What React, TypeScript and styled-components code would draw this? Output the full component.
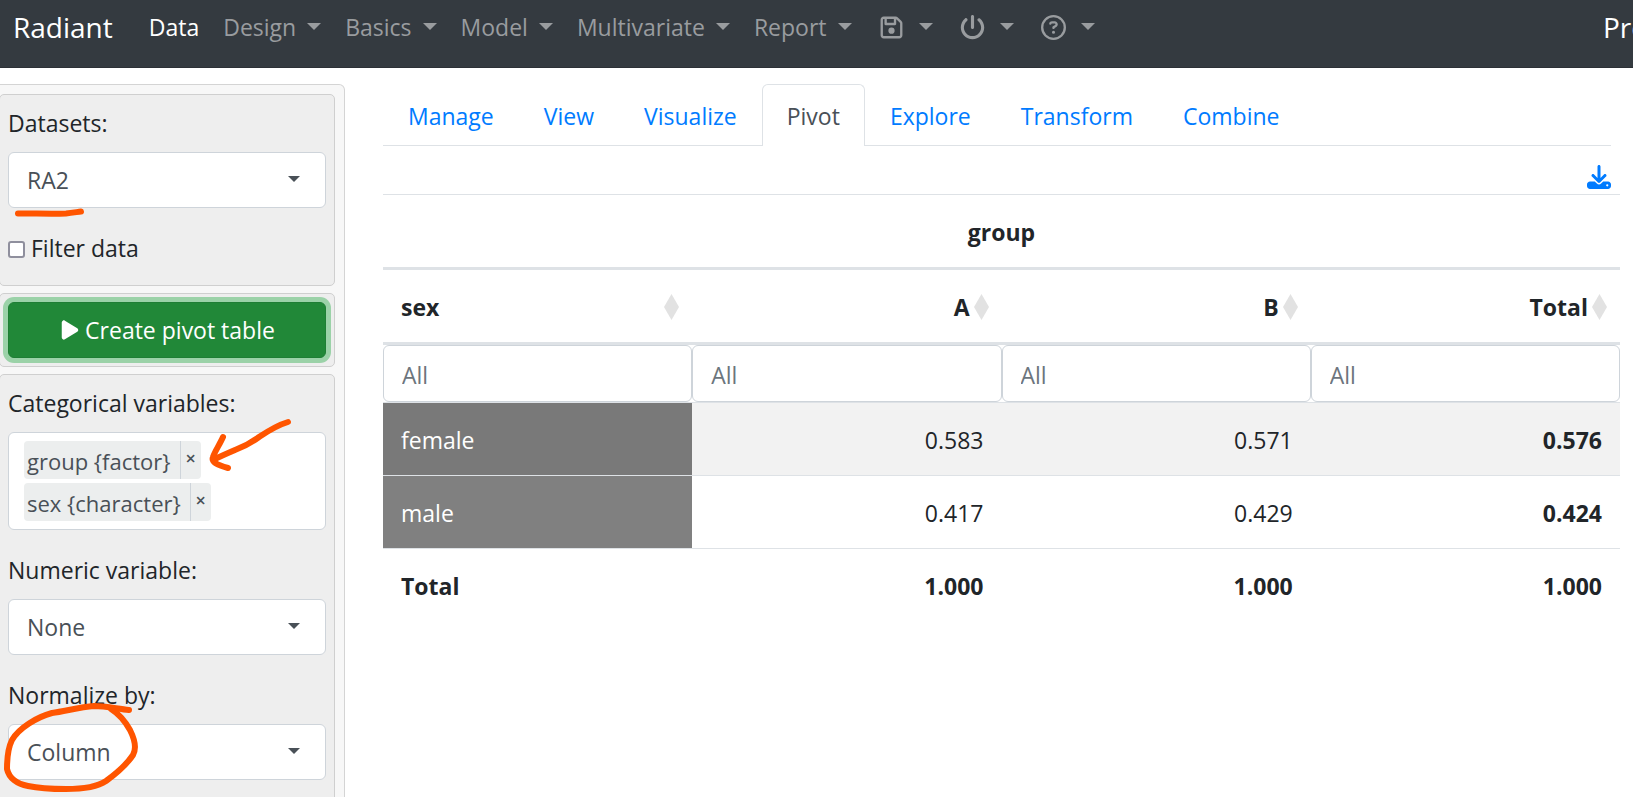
import React from "react";
import styled, { createGlobalStyle } from "styled-components";
import {
  FaDownload,
  FaPlay,
  FaPowerOff,
  FaRegCircleQuestion,
  FaRegFloppyDisk,
} from "react-icons/fa6";

const GlobalStyle = createGlobalStyle`
  *, *::before, *::after { box-sizing: border-box; }
  html, body { margin: 0; background: #fff; }
  html { overflow: hidden; }
  #root { height: 100vh; overflow: hidden; }
  body, button, input, select {
    font-family: "Open Sans", "Noto Sans", sans-serif;
    font-size: 23px;
    line-height: 36px;
    color: #212529;
  }
`;

const Navbar = styled.nav`
  display: flex;
  align-items: flex-start;
  height: 68px;
  padding: 0 0 0 13px;
  background: #343a40;
  border-bottom: 1px solid #2c3036;
  white-space: nowrap;
  overflow: hidden;
`;

const Brand = styled.a`
  padding-top: 7px;
  font-size: 28px;
  line-height: 40px;
  color: #fff;
  text-decoration: none;
`;

const Credit = styled(Brand)`
  flex: none;
  width: 30px;
  margin-left: auto;
  overflow: hidden;
`;

const NavList = styled.ul`
  display: flex;
  margin: 0 0 0 24px;
  padding: 9px 0 0;
  list-style: none;
`;

const NavLink = styled.a<{ $active?: boolean }>`
  display: flex;
  align-items: center;
  gap: 11px;
  height: 36px;
  padding: 0 12px;
  color: ${(p) => (p.$active ? "#fff" : "#999c9f")};
  text-decoration: none;
`;

const NavIcon = styled.span`
  display: flex;
  justify-content: center;
  width: 32px;
`;

const NavCaret = styled.span`
  margin: 0 0 1px;
  border: 7px solid transparent;
  border-top-color: currentColor;
  border-bottom: 0;
`;

const Page = styled.div`
  display: flex;
  align-items: flex-start;
  padding-top: 16px;
`;

const Sidebar = styled.aside`
  flex: none;
  width: 345px;
  padding: 9px 9px 0 0;
  background: #f7f7f7;
  border: 1px solid #d4d4d4;
  border-left: 0;
  border-radius: 0 6px 0 0;
`;

const Well = styled.section<{ $pad: string }>`
  margin: 0 0 7px -1px;
  padding: ${(p) => p.$pad};
  background: #eee;
  border: 1px solid #cfcfcf;
  border-radius: 5px;
`;

const Field = styled.div`
  display: flex;
  flex-direction: column;
  gap: 11px;
  margin-bottom: 22px;
`;

const SelectShell = styled.div`
  display: grid;
  align-items: center;
  > * { grid-area: 1 / 1; }
`;

const SelectBox = styled.select`
  width: 100%;
  height: 56px;
  padding: 0 48px 0 18px;
  appearance: none;
  color: #495057;
  background: #fff;
  border: 1px solid #ced4da;
  border-radius: 6px;
`;

const SelectCaret = styled.span`
  justify-self: end;
  margin: 0 26px 2px 0;
  border: 6px solid transparent;
  border-top-color: #495057;
  border-bottom: 0;
  pointer-events: none;
`;

const CheckLabel = styled.label`
  display: flex;
  align-items: center;
  gap: 6px;
`;

const CheckBox = styled.input`
  width: 17px;
  height: 17px;
  margin: 3px 0 0;
  appearance: none;
  background: #fff;
  border: 2px solid #8f8f9d;
  border-radius: 3px;
`;

const RunButton = styled.button`
  display: flex;
  align-items: center;
  justify-content: center;
  gap: 4px;
  width: 100%;
  height: 56px;
  color: #fff;
  background: #218838;
  border: 1px solid #1e7e34;
  border-radius: 6px;
  box-shadow: 0 0 0 5px #9bd2a8;
`;

const ChipBox = styled.div`
  display: flex;
  flex-direction: column;
  align-items: flex-start;
  gap: 4px;
  padding: 8px 15px;
  background: #fff;
  border: 1px solid #ced4da;
  border-radius: 6px;
`;

const Chip = styled.span`
  display: flex;
  height: 38px;
  padding-left: 3px;
  font-size: 22px;
  line-height: 40px;
  color: #495057;
  background: #eceeee;
  border-radius: 4px;
`;

const ChipRemove = styled.button`
  width: 21px;
  margin-left: 9px;
  padding: 0 0 4px;
  font-size: 18px;
  line-height: 30px;
  font-weight: 600;
  color: #495057;
  background: none;
  border: 0;
  border-left: 1px solid #ced4da;
`;

const Main = styled.main`
  flex: 1;
  min-width: 0;
  padding: 0 13px 0 38px;
`;

const Tabs = styled.ul`
  display: flex;
  margin: 0 9px 0 0;
  padding: 0;
  list-style: none;
  border-bottom: 1px solid #dee2e6;
`;

const Tab = styled.a<{ $active?: boolean }>`
  display: block;
  height: 62px;
  margin-bottom: -1px;
  padding: 13px 24px 0;
  text-decoration: none;
  color: ${(p) => (p.$active ? "#495057" : "#007bff")};
  background: ${(p) => (p.$active ? "#fff" : "transparent")};
  border: 1px solid ${(p) => (p.$active ? "#dee2e6" : "transparent")};
  border-bottom: 0;
  border-radius: 6px 6px 0 0;
`;

const Toolbar = styled.div`
  display: flex;
  justify-content: flex-end;
  height: 48px;
  padding: 19px 9px 0 0;
`;

const DownloadLink = styled.a`
  display: block;
  height: 24px;
  color: #007bff;
  svg { display: block; }
`;

const PivotTable = styled.table`
  width: 100%;
  table-layout: fixed;
  border-collapse: separate;
  border-spacing: 0;
`;

const GroupHead = styled.th`
  padding: 19px 18px 17px;
  border-top: 1px solid #dee2e6;
  border-bottom: 3px solid #dee2e6;
`;

const SortHead = styled.th`
  padding: 19px 13px 17px 18px;
  border-bottom: 3px solid #dee2e6;
`;

const SortButton = styled.button<{ $spread?: boolean }>`
  display: flex;
  align-items: center;
  justify-content: ${(p) => (p.$spread ? "space-between" : "flex-end")};
  gap: 4px;
  width: 100%;
  height: 36px;
  padding: 0;
  font-weight: 700;
  background: none;
  border: 0;
`;

const FilterCell = styled.td`
  padding: 0;
`;

const FilterInput = styled.input`
  display: block;
  width: 100%;
  height: 57px;
  padding: 2px 18px 0;
  background: #fff;
  border: 1px solid #ced4da;
  border-radius: 6px;
  &::placeholder { color: #6c757d; opacity: 1; }
`;

const BodyRow = styled.tr<{ $odd: boolean }>`
  background: ${(p) => (p.$odd ? "#f2f2f2" : "#fff")};
`;

const RowName = styled.th<{ $odd: boolean }>`
  padding: 19px 18px 17px;
  font-weight: 400;
  text-align: left;
  color: #fff;
  background: ${(p) => (p.$odd ? "#797979" : "#808080")};
  border-top: 1px solid #dee2e6;
`;

const Value = styled.td<{ $bold?: boolean }>`
  padding: 19px 18px 17px;
  font-weight: ${(p) => (p.$bold ? 700 : 400)};
  text-align: right;
  border-top: 1px solid #dee2e6;
`;

const FootName = styled.th`
  padding: 19px 18px 17px;
  text-align: left;
  border-top: 1px solid #dee2e6;
`;

const Ink = styled.svg`
  position: absolute;
  top: 0;
  left: 0;
  width: 345px;
  height: 797px;
  fill: none;
  stroke: #ff5500;
  stroke-linecap: round;
  stroke-linejoin: round;
  pointer-events: none;
`;

const menus: { label: string; icon?: React.ReactNode }[] = [
  { label: "Design" },
  { label: "Basics" },
  { label: "Model" },
  { label: "Multivariate" },
  { label: "Report" },
  { label: "Save", icon: <FaRegFloppyDisk size={25} /> },
  { label: "Power", icon: <FaPowerOff size={25} /> },
  { label: "Help", icon: <FaRegCircleQuestion size={25} /> },
];

const tabs = ["Manage", "View", "Visualize", "Pivot", "Explore", "Transform", "Combine"];
const columns = ["sex", "A", "B", "Total"];
const rows = [
  { name: "female", values: ["0.583", "0.571", "0.576"] },
  { name: "male", values: ["0.417", "0.429", "0.424"] },
];

function SelectField({ id, label, value }: { id: string; label: string; value: string }) {
  return (
    <Field>
      <label htmlFor={id}>{label}</label>
      <SelectShell>
        <SelectBox id={id} defaultValue={value}>
          <option>{value}</option>
        </SelectBox>
        <SelectCaret />
      </SelectShell>
    </Field>
  );
}

function SortMark() {
  return (
    <svg width="15" height="26" viewBox="0 0 15 26" aria-hidden="true">
      <path d="M7.5 0 15 13 7.5 26 0 13Z" fill="#e2e2e2" />
    </svg>
  );
}

export default function App() {
  return (
    <>
      <GlobalStyle />
      <Navbar>
        <Brand href="#">Radiant</Brand>
        <NavList>
          <li>
            <NavLink href="#" $active>Data</NavLink>
          </li>
          {menus.map((m) => (
            <li key={m.label}>
              <NavLink href="#" aria-label={m.label}>
                {m.icon ? <NavIcon>{m.icon}</NavIcon> : m.label}
                <NavCaret />
              </NavLink>
            </li>
          ))}
        </NavList>
        <Credit href="#">Pre</Credit>
      </Navbar>

      <Page>
        <Sidebar>
          <Well $pad="10px 8px 19px">
            <SelectField id="dataset" label="Datasets:" value="RA2" />
            <CheckLabel>
              <CheckBox type="checkbox" />
              Filter data
            </CheckLabel>
          </Well>
          <Well $pad="8px">
            <RunButton type="button">
              <FaPlay size={22} />
              Create pivot table
            </RunButton>
          </Well>
          <Well $pad="10px 8px 24px">
            <Field role="group" aria-labelledby="categorical">
              <span id="categorical">Categorical variables:</span>
              <ChipBox>
                {["group {factor}", "sex {character}"].map((c) => (
                  <Chip key={c}>
                    {c}
                    <ChipRemove type="button" aria-label={"Remove " + c}>×</ChipRemove>
                  </Chip>
                ))}
              </ChipBox>
            </Field>
            <SelectField id="numeric" label="Numeric variable:" value="None" />
            <SelectField id="normalize" label="Normalize by:" value="Column" />
          </Well>
        </Sidebar>

        <Main>
          <Tabs>
            {tabs.map((t) => (
              <li key={t}>
                <Tab href="#" $active={t === "Pivot"}>{t}</Tab>
              </li>
            ))}
          </Tabs>
          <Toolbar>
            <DownloadLink href="#" aria-label="Download">
              <FaDownload size={24} />
            </DownloadLink>
          </Toolbar>
          <PivotTable>
            <thead>
              <tr>
                <GroupHead />
                <GroupHead colSpan={2}>group</GroupHead>
                <GroupHead />
              </tr>
              <tr>
                {columns.map((c, i) => (
                  <SortHead key={c}>
                    <SortButton type="button" $spread={i === 0}>
                      {c}
                      <SortMark />
                    </SortButton>
                  </SortHead>
                ))}
              </tr>
              <tr>
                {columns.map((c) => (
                  <FilterCell key={c}>
                    <FilterInput type="search" placeholder="All" aria-label={"Filter " + c} />
                  </FilterCell>
                ))}
              </tr>
            </thead>
            <tbody>
              {rows.map((r, i) => (
                <BodyRow key={r.name} $odd={i % 2 === 0}>
                  <RowName $odd={i % 2 === 0}>{r.name}</RowName>
                  {r.values.map((v, j) => (
                    <Value key={j} $bold={j === 2}>{v}</Value>
                  ))}
                </BodyRow>
              ))}
            </tbody>
            <tfoot>
              <tr>
                <FootName>Total</FootName>
                {[0, 1, 2].map((n) => (
                  <Value key={n} $bold>1.000</Value>
                ))}
              </tr>
            </tfoot>
          </PivotTable>
        </Main>
      </Page>

      <Ink viewBox="0 0 345 797" strokeWidth="6" aria-hidden="true">
        <path d="M18 213.500C36 213.500 54 214 66 213.500C72 213 77 212 81 211.500" />
        <path d="M288 422C278 425 268 431 259 437C251 443 243 447 235 450C228 453 219 457 213 460M223 437C220 444 215 451 213 457C211 462 217 465 228 468" />
        <path d="M129 710C118 709 106 706 94 706C80 707 66 711 52 713C37 717 19 728 12 740C7 750 7 762 7 769C9 778 17 784 28 786C42 789 56 789 66 789C82 789 97 787 106 781C117 773 127 764 133 755C137 748 134 738 130 730C125 721 119 714 111 709" />
      </Ink>
    </>
  );
}
